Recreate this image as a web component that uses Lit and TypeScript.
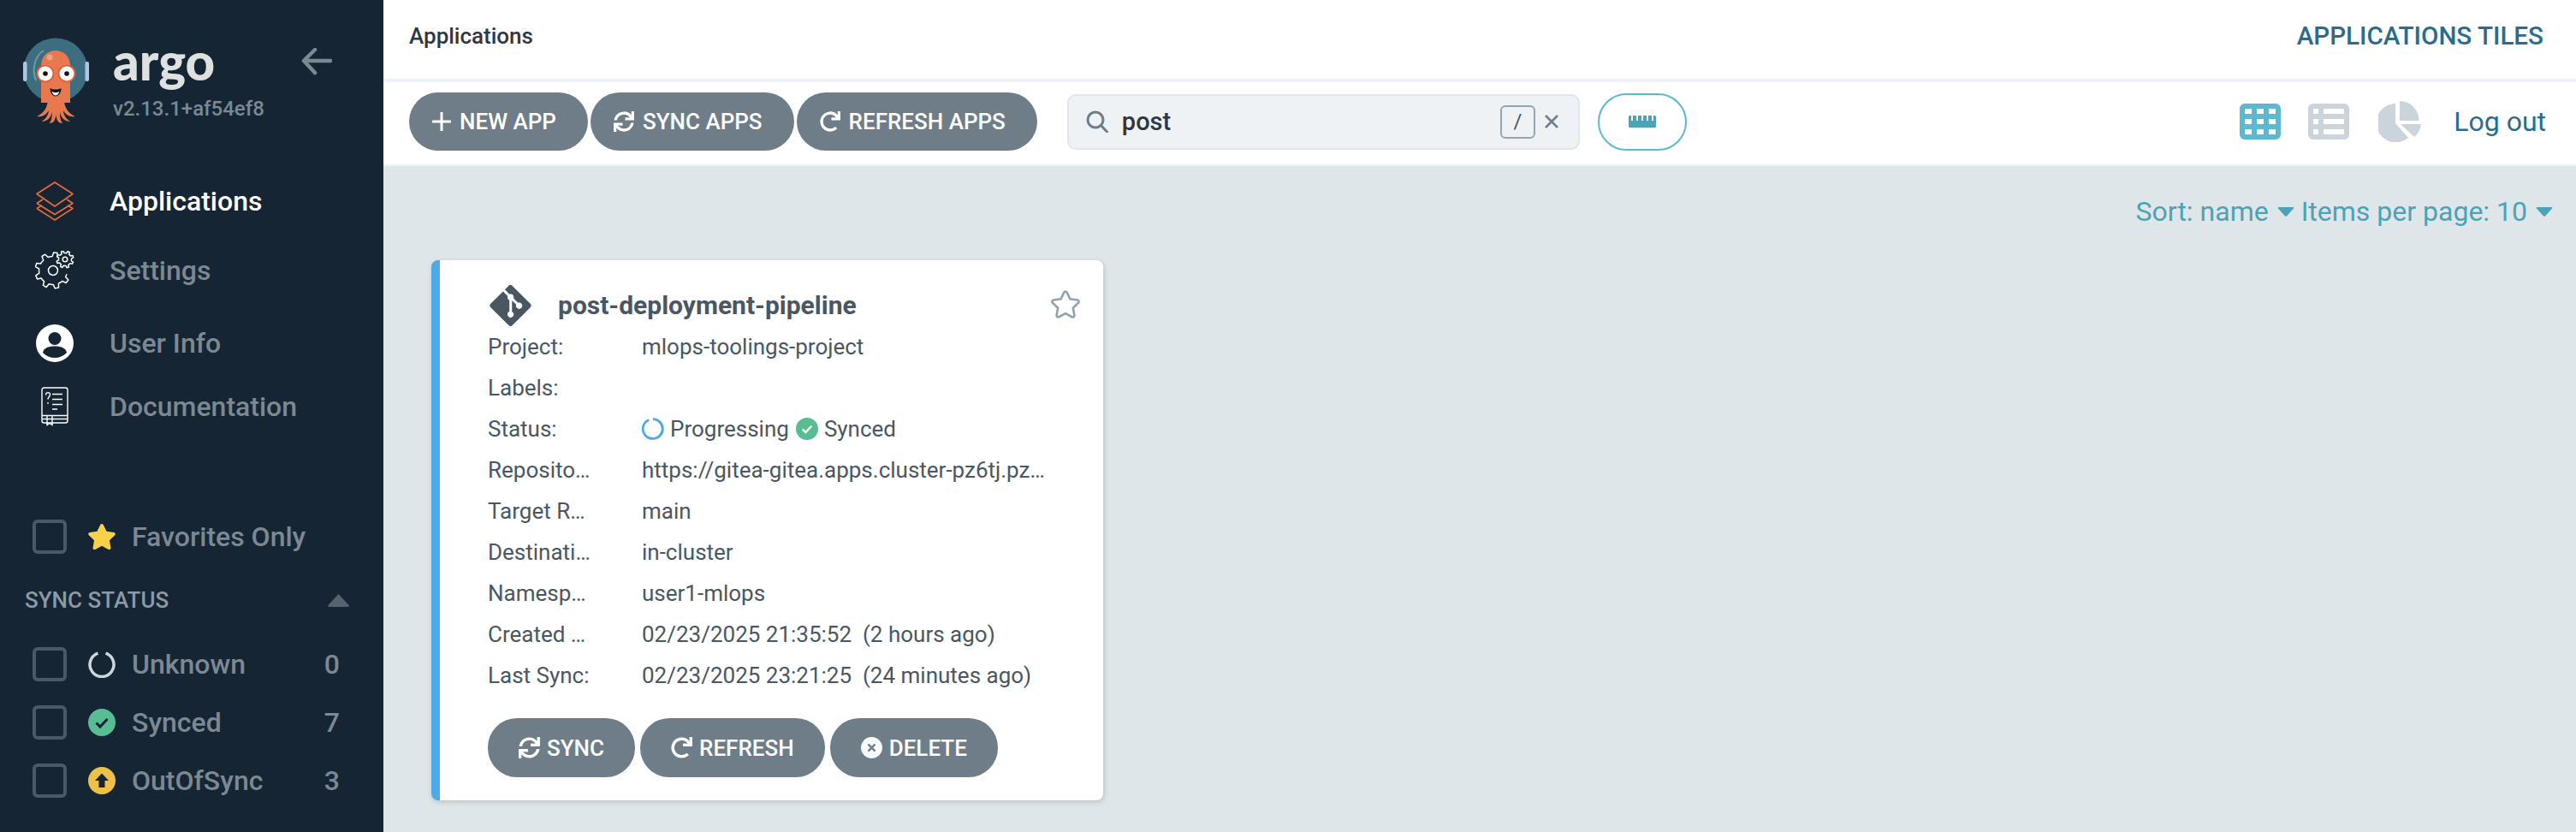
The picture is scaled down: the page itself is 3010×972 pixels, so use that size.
import { LitElement, html, css, svg } from 'lit';
import { customElement, state } from 'lit/decorators.js';

const FA_SYNC = 'M440.65 12.57l4 82.77A247.16 247.16 0 0 0 255.83 8C134.73 8 33.91 94.92 12.29 209.82A12 12 0 0 0 24.09 224h49.05a12 12 0 0 0 11.67-9.26 175.91 175.91 0 0 1 317-56.94l-101.46-4.86a12 12 0 0 0-12.57 12v47.41a12 12 0 0 0 12 12H500a12 12 0 0 0 12-12V12a12 12 0 0 0-12-12h-47.37a12 12 0 0 0-11.98 12.57zM255.83 432a175.61 175.61 0 0 1-146-77.8l101.8 4.87a12 12 0 0 0 12.57-12v-47.4a12 12 0 0 0-12-12H12a12 12 0 0 0-12 12V500a12 12 0 0 0 12 12h47.35a12 12 0 0 0 12-12.6l-4.15-82.57A247.17 247.17 0 0 0 255.83 504c121.11 0 221.93-86.92 243.55-201.82a12 12 0 0 0-11.8-14.18h-49.05a12 12 0 0 0-11.67 9.26A175.86 175.86 0 0 1 255.83 432z';
const FA_REDO = 'M500.33 0h-47.41a12 12 0 0 0-12 12.57l4 82.76A247.42 247.42 0 0 0 256 8C119.34 8 7.9 119.53 8 256.19 8.1 393.07 119.1 504 256 504a247.1 247.1 0 0 0 166.18-63.91 12 12 0 0 0 .48-17.43l-34-34a12 12 0 0 0-16.38-.55A176 176 0 1 1 402.1 157.8l-101.53-4.87a12 12 0 0 0-12.57 12v47.41a12 12 0 0 0 12 12h200.33a12 12 0 0 0 12-12V12a12 12 0 0 0-12-12z';
const FA_GIT = 'M439.55 236.05L244 40.45a28.87 28.87 0 0 0-40.81 0l-40.66 40.63 51.52 51.52c27.06-9.14 52.68 16.77 43.39 43.68l49.66 49.66c34.23-11.8 61.18 31 35.49 56.69-26.49 26.49-70.21-2.87-56-37.34L240.22 199v121.85c25.3 12.54 22.26 41.85 9.08 55a34.34 34.34 0 0 1-48.55 0c-17.57-17.6-11.07-46.91 11.25-56v-123c-20.8-8.51-24.6-30.74-18.64-45L142.57 101 8.45 235.14a28.86 28.86 0 0 0 0 40.81l195.61 195.6a28.86 28.86 0 0 0 40.8 0l194.69-194.69a28.86 28.86 0 0 0 0-40.81z';
const FA_STAR = 'M259.3 17.8L194 150.2 47.9 171.5c-26.2 3.8-36.7 36.1-17.7 54.6l105.7 103-25 145.5c-4.5 26.3 23.2 46 46.4 33.7L288 439.6l130.7 68.7c23.2 12.2 50.9-7.4 46.4-33.7l-25-145.5 105.7-103c19-18.5 8.5-50.8-17.7-54.6L382 150.2 316.7 17.8c-11.7-23.6-45.6-23.9-57.4 0z';

// teeth along an arc, left open when the arc is not a full circle
function gearPath(cx: number, cy: number, rOut: number, rIn: number, teeth: number, from = 0, to = 360) {
  const step = 360 / teeth;
  const pts: string[] = [];
  const at = (r: number, a: number) => {
    const rad = (a * Math.PI) / 180;
    return `${(cx + r * Math.cos(rad)).toFixed(2)} ${(cy + r * Math.sin(rad)).toFixed(2)}`;
  };
  for (let a = from; a < to - 0.01; a += step) {
    pts.push(at(rIn, a), at(rIn, a + step * 0.3), at(rOut, a + step * 0.42), at(rOut, a + step * 0.72), at(rIn, a + step * 0.85));
  }
  pts.push(at(rIn, to));
  return 'M' + pts.join('L') + (to - from >= 360 ? 'Z' : '');
}

const syncIcon = (cls = 'btn-icon') => html`<svg class=${cls} viewBox="0 0 512 512"><path fill="currentColor" d=${FA_SYNC}></path></svg>`;
const redoIcon = (cls = 'btn-icon') => html`<svg class=${cls} viewBox="0 0 512 512"><path fill="currentColor" d=${FA_REDO}></path></svg>`;
const plusIcon = html`<svg class="btn-icon plus" viewBox="0 0 22 22"><path d="M11 1v20M1 11h20" stroke="currentColor" stroke-width="3" stroke-linecap="round"></path></svg>`;
const closeCircle = html`<svg class="btn-icon" viewBox="0 0 26 26"><circle cx="13" cy="13" r="13" fill="#f7f9fa"></circle><path d="M9.500 9.500l7 7M16.500 9.500l-7 7" stroke="#6f7d88" stroke-width="2.400" stroke-linecap="round"></path></svg>`;

const logo = html`<svg class="logo" viewBox="0 0 78 101">
  <circle cx="38" cy="38" r="37.500" fill="#3c6e80"></circle>
  <rect x="0" y="28" width="4.500" height="23" rx="2" fill="#aac9e0"></rect>
  <rect x="72.500" y="28" width="4.500" height="23" rx="2" fill="#aac9e0"></rect>
  <path d="M15 50C10 38 13 22 24 15" fill="none" stroke="#6d9aa8" stroke-width="2"></path>
  <path transform="translate(38 0) scale(.76 1) translate(-38.500 0)" d="M26 76C24 85 17 89 10 92C18 93 24 90 28 85C27 91 23 95 17 98C25 98 31 94 33 87C33 93 32 97 29 100C36 100 38 96 39 90C40 96 42 100 49 100C46 97 45 93 45 87C47 94 53 98 61 98C55 95 51 91 50 85C54 90 60 93 68 92C61 89 54 85 52 76L46 72H32Z" fill="#e8784d"></path>
  <path d="M21 76V33C21 9 55 9 55 33V76Z" fill="#e8784d"></path>
  <circle cx="31" cy="23" r="3.500" fill="#f0a184"></circle>
  <circle cx="26" cy="42" r="9.500" fill="#fff" stroke="#e0623c" stroke-width="2"></circle>
  <circle cx="51" cy="42" r="9.500" fill="#fff" stroke="#e0623c" stroke-width="2"></circle>
  <circle cx="26" cy="42" r="2.800" fill="#111"></circle>
  <circle cx="51" cy="42" r="2.800" fill="#111"></circle>
  <path d="M31.500 59C35.500 61 40.500 61 44.500 59C44.500 65 41 68.500 38 68.500C35 68.500 31.500 65 31.500 59Z" fill="#111"></path>
  <path d="M33.500 63C36.500 64.500 39.500 64.500 42.500 63C41.500 66 39.500 67.500 38 67.500C36.500 67.500 34.500 66 33.500 63Z" fill="#fff"></path>
</svg>`;

const layersIcon = html`<svg class="nav-svg" viewBox="0 0 46 46" fill="none" stroke="#e96d3b" stroke-width="1.600" stroke-linejoin="round">
  <path d="M2 25.500L23 38.500L44 25.500L37 21M9 21L2 25.500"></path>
  <path d="M2 31.500L23 45L44 31.500L38 28M8 28L2 31.500"></path>
  <path d="M23 1L44 14.500L23 29L2 14.500Z"></path>
</svg>`;

const settingsIcon = html`<svg class="nav-svg" viewBox="0 0 46 46" fill="none" stroke="#fff" stroke-width="1.500" stroke-linejoin="round">
  <path d=${gearPath(21, 23, 21, 16.5, 9, 15, 285)}></path>
  <circle cx="21" cy="23" r="5.500"></circle>
  <path d=${gearPath(35, 10, 10, 7.5, 8)}></path>
  <circle cx="35" cy="10" r="2.800"></circle>
</svg>`;

const userIcon = html`<svg class="nav-svg" viewBox="0 0 46 46">
  <circle cx="23" cy="23" r="22" fill="#fff"></circle>
  <circle cx="23" cy="17.500" r="7.500" fill="#152533"></circle>
  <path d="M9 34C10 28 17 26.500 23 26.500C29 26.500 36 28 37 34C33 38 28 40 23 40C18 40 13 38 9 34Z" fill="#152533"></path>
</svg>`;

const docIcon = html`<svg class="nav-svg" viewBox="0 0 46 46" fill="none" stroke="#fff" stroke-width="1.400">
  <rect x="8" y="1" width="30" height="41" rx="2.500"></rect>
  <path d="M8 33.500H38M8 37.500H38M14 34V44.500L17 42.500L20 44.500V34"></path>
  <path d="M20 8.500H32M20 14.500H32M20 20.500H32M20 26H26"></path>
  <path d="M12.500 9.500C12.500 5.500 17.500 6 17.500 9C17.500 11.500 15 11.500 15 14.500M15 18V19.800"></path>
</svg>`;

const starFilled = html`<svg class="status-icon" viewBox="0 0 576 512"><path fill="#f8d148" d=${FA_STAR}></path></svg>`;
const unknownIcon = html`<svg class="status-icon" viewBox="0 0 32 32"><path d="M11.500 3.200A14 14 0 1 0 20.500 3.200" fill="none" stroke="#ced6dd" stroke-width="3.500"></path></svg>`;
const syncedIcon = (cls = 'status-icon') => html`<svg class=${cls} viewBox="0 0 32 32"><circle cx="16" cy="16" r="16" fill="#59bd94"></circle><path d="M9.500 16.500L14 21L22.500 12" fill="none" stroke=${cls === 'status-icon' ? '#152533' : '#fff'} stroke-width="3"></path></svg>`;
const outOfSyncIcon = html`<svg class="status-icon" viewBox="0 0 32 32"><circle cx="16" cy="16" r="16" fill="#efc047"></circle><path d="M16 7.500L24 16H19.500V24H12.500V16H8Z" fill="#152533"></path></svg>`;

const CARD_ROWS = [
  { label: 'Project:', value: 'mlops-toolings-project' },
  { label: 'Labels:', value: '' },
  { label: 'Status:', value: 'status' },
  { label: 'Repository:', value: 'https://gitea-gitea.apps.cluster-pz6tj.pz6tj.sandbox.opentlc.com/user1/mlops' },
  { label: 'Target Revision:', value: 'main' },
  { label: 'Destination:', value: 'in-cluster' },
  { label: 'Namespace:', value: 'user1-mlops' },
  { label: 'Created At:', value: '02/23/2025 21:35:52\u00a0 (2 hours ago)' },
  { label: 'Last Sync:', value: '02/23/2025 23:21:25\u00a0 (24 minutes ago)' },
];

@customElement('app-root')
export class AppRoot extends LitElement {
  @state() search = 'post';

  static styles = css`
    :host { display: block; width: 3010px; height: 972px; overflow: hidden; font-family: Roboto, sans-serif; }
    * { box-sizing: border-box; }
    .page { display: flex; height: 972px; }

    .sidebar { width: 448px; flex-shrink: 0; background: #152533; color: #7c8892; }
    .brand { display: flex; height: 212px; padding: 44px 0 0 27px; }
    .logo { width: 78px; height: 101px; flex-shrink: 0; }
    .brand-text { margin-left: 27px; width: 220px; }
    .wordmark { font-family: Lato, sans-serif; font-weight: 900; font-size: 60px; line-height: 60px; color: #dfe1e0; margin-top: -3px; height: 71px; }
    .version { font-size: 24px; line-height: 30px; font-weight: 500; white-space: nowrap; }
    .collapse { width: 36px; height: 32px; margin-top: 12px; flex-shrink: 0; }

    .nav-item { display: flex; align-items: center; height: 46px; padding-left: 41px; font-size: 32px; font-weight: 500; }
    .nav-item.active { color: #fff; }
    .nav-item:nth-child(2) { margin-top: 35px; }
    .nav-item:nth-child(3) { margin-top: 39px; }
    .nav-item:nth-child(4) { margin-top: 28px; }
    .nav-svg { width: 46px; height: 46px; margin-right: 41px; flex-shrink: 0; }

    .filter { display: flex; align-items: center; height: 40px; padding: 0 51px 0 38px; font-size: 32px; font-weight: 500; }
    .filter.favorites { margin-top: 109px; }
    .filter + .filter { margin-top: 28px; }
    .check { width: 40px; height: 40px; border: 4px solid #4b5966; border-radius: 6px; flex-shrink: 0; margin-right: 25px; }
    .status-icon { width: 32px; height: 32px; flex-shrink: 0; margin-right: 19px; }
    .favorites .status-icon { width: 34px; margin-left: -1px; margin-right: 18px; }
    .count { margin-left: auto; }
    .filter-title { display: flex; align-items: center; justify-content: space-between; height: 40px; margin: 34px 0 35px; padding: 0 40px 0 29px; font-size: 26px; font-weight: 500; color: #8d99a3; }
    .caret-up { width: 25px; height: 15px; }

    .main { flex: 1; min-width: 0; display: flex; flex-direction: column; background: #dee6ea; }
    .topbar { display: flex; align-items: center; justify-content: space-between; height: 96px; padding: 0 38px 8px 30px; background: #fff; border-bottom: 4px solid #eff2f5; }
    .crumb { font-size: 26px; font-weight: 500; color: #2f3644; }
    .page-title { font-size: 29.6px; font-weight: 500; color: #2c6c8a; }

    .toolbar { display: flex; align-items: center; height: 98px; padding: 0 35px 4px 30px; background: #fff; border-bottom: 2px solid #eff2f5; }
    .actions { display: flex; gap: 3px; }
    .btn { display: flex; align-items: center; gap: 10px; height: 68px; padding: 0 37px 0 27px; border: 0; border-radius: 34px; background: #6f7d88; color: #fff; font-family: inherit; font-size: 26px; font-weight: 500; white-space: nowrap; }
    .btn-icon { width: 24px; height: 24px; flex-shrink: 0; }
    .btn-icon.plus { width: 22px; height: 22px; }

    .search { display: flex; align-items: center; width: 599px; height: 65px; margin-left: 35px; padding: 0 23px 0 20px; background: #eff2f5; border: 2px solid #e1e6ea; border-radius: 10px; }
    .search-icon { width: 26px; height: 26px; flex-shrink: 0; }
    .search-text { flex: 1; margin-left: 16px; font-size: 29px; font-weight: 500; color: #2f3644; }
    .kbd { display: flex; align-items: center; justify-content: center; width: 41px; height: 39px; border: 2px solid #95a4b2; border-radius: 6px; font-size: 24px; color: #4b5563; }
    .clear { width: 16px; height: 16px; margin-left: 11px; flex-shrink: 0; }
    .ruler-btn { display: flex; align-items: center; justify-content: center; width: 104px; height: 67px; margin-left: 21px; border: 2px solid #5bb9d0; border-radius: 34px; background: #fff; }
    .ruler { width: 32px; height: 14px; }

    .view-tools { display: flex; align-items: center; margin-left: auto; }
    .view-icon { width: 48px; height: 42px; margin-right: 32px; }
    .pie { width: 50px; height: 48px; margin-right: 38px; margin-left: 2px; }
    .logout { font-size: 32px; color: #2c6c8a; }

    .content { flex: 1; padding: 0 27px 0 56px; }
    .sort-bar { display: flex; justify-content: flex-end; align-items: center; height: 58px; margin-top: 24px; font-size: 32px; color: #4aa3b6; }
    .sort-bar span { white-space: nowrap; }
    .caret-down { width: 20px; height: 11px; margin: 0 8px 0 10px; }
    .caret-down:last-child { margin-right: 0; }

    .card { width: 785px; height: 631px; margin-top: 28px; padding: 28px 26px 0 56px; background: #fff; border-left: 10px solid #4fa9e6; border-radius: 8px; box-shadow: 1px 2px 6px rgba(0, 0, 0, 0.16); }
    .card-title { display: flex; align-items: center; height: 49px; }
    .git { width: 49px; height: 48px; margin-left: 2px; flex-shrink: 0; }
    .app-name { flex: 1; margin-left: 31px; font-size: 30px; font-weight: 700; color: #495763; }
    .fav { width: 36px; height: 33px; margin-top: -2px; }
    .row { display: grid; grid-template-columns: 180px 1fr; align-items: center; height: 48px; padding-right: 40px; font-size: 26px; color: #495763; }
    .row div { white-space: nowrap; overflow: hidden; text-overflow: ellipsis; }
    .row .key { padding-right: 60px; }
    .status { display: flex; align-items: center; }
    .status svg { width: 26px; height: 26px; flex-shrink: 0; margin-right: 7px; }
    .status span { margin-right: 8px; }
    .card-actions { display: flex; gap: 6px; margin-top: 26px; }
    .card-actions .btn { height: 69px; padding: 0 36px; gap: 8px; }
    .card-actions .btn-icon { width: 25px; height: 25px; }
  `;

  private renderFilter(icon: unknown, label: string, count: string) {
    return html`
      <div class="filter">
        <div class="check"></div>
        ${icon}
        <span>${label}</span>
        <span class="count">${count}</span>
      </div>
    `;
  }

  private renderRow(row: { label: string; value: string }) {
    const value = row.value === 'status'
      ? html`<div class="status">
          <svg viewBox="0 0 25 25"><path d="M8 2.300A11 11 0 1 0 12.500 1.500M12.500 1.500A11 11 0 0 1 12.500 23.500" fill="none" stroke="#4fa9e6" stroke-width="2.600"></path></svg>
          <span>Progressing</span>
          ${syncedIcon('synced')}
          <span>Synced</span>
        </div>`
      : html`<div>${row.value}</div>`;
    return html`<div class="row"><div class="key">${row.label}</div>${value}</div>`;
  }

  render() {
    return html`
      <div class="page">
        <aside class="sidebar">
          <div class="brand">
            ${logo}
            <div class="brand-text">
              <div class="wordmark">argo</div>
              <div class="version">v2.13.1+af54ef8</div>
            </div>
            <svg class="collapse" viewBox="0 0 36 32" fill="none" stroke="#7c8892" stroke-width="4.500" stroke-linecap="round" stroke-linejoin="round"><path d="M34 15H3M16 2L3 15L16 29"></path></svg>
          </div>
          <nav>
            <div class="nav-item active">${layersIcon}Applications</div>
            <div class="nav-item">${settingsIcon}Settings</div>
            <div class="nav-item">${userIcon}User Info</div>
            <div class="nav-item">${docIcon}Documentation</div>
          </nav>
          <div class="filter favorites">
            <div class="check"></div>
            ${starFilled}
            <span>Favorites Only</span>
          </div>
          <div class="filter-title">
            <span>SYNC STATUS</span>
            <svg class="caret-up" viewBox="0 0 25 15"><path d="M12.500 0L25 13.500Q25 15 23 15H2Q0 15 0 13.500Z" fill="#56626d"></path></svg>
          </div>
          ${this.renderFilter(unknownIcon, 'Unknown', '0')}
          ${this.renderFilter(syncedIcon(), 'Synced', '7')}
          ${this.renderFilter(outOfSyncIcon, 'OutOfSync', '3')}
        </aside>
        <main class="main">
          <div class="topbar">
            <span class="crumb">Applications</span>
            <span class="page-title">APPLICATIONS TILES</span>
          </div>
          <div class="toolbar">
            <div class="actions">
              <button class="btn">${plusIcon}NEW APP</button>
              <button class="btn">${syncIcon()}SYNC APPS</button>
              <button class="btn">${redoIcon()}REFRESH APPS</button>
            </div>
            <div class="search">
              <svg class="search-icon" viewBox="0 0 26 26" fill="none" stroke="#6f7d88" stroke-width="3"><circle cx="11" cy="11" r="9"></circle><path d="M17.500 17.500L24.500 25" stroke-linecap="round"></path></svg>
              <span class="search-text">${this.search}</span>
              <span class="kbd">/</span>
              <svg class="clear" viewBox="0 0 16 16" stroke="#6f7d88" stroke-width="2.600"><path d="M1 1L15 15M15 1L1 15"></path></svg>
            </div>
            <button class="ruler-btn">
              <svg class="ruler" viewBox="0 0 32 14"><path fill="#4aa3b6" d="M0 1.500Q0 0 1.500 0H3V6H5V0H9V6H11V0H15V6H17V0H21V6H23V0H27V6H29V0H30.500Q32 0 32 1.500V12.500Q32 14 30.500 14H1.500Q0 14 0 12.500Z"></path></svg>
            </button>
            <div class="view-tools">
              <svg class="view-icon" viewBox="0 0 48 42">
                <rect width="48" height="42" rx="6" fill="#5bb9d0"></rect>
                <path fill="#fff" d="M6 6h8v6H6zM20 6h8v6h-8zM34 6h8v6h-8zM6 18h8v6H6zM20 18h8v6h-8zM34 18h8v6h-8zM6 30h8v6H6zM20 30h8v6h-8zM34 30h8v6h-8z"></path>
              </svg>
              <svg class="view-icon" viewBox="0 0 48 42">
                <rect width="48" height="42" rx="6" fill="#ccd4db"></rect>
                <path fill="#fff" d="M6 6h6v6H6zM18 6h24v6H18zM6 18h6v6H6zM18 18h24v6H18zM6 30h6v6H6zM18 30h24v6H18z"></path>
              </svg>
              <svg class="pie" viewBox="0 0 50 48" fill="#ccd4db">
                <path d="M20 3V26L35 43A22.700 22.700 0 1 1 20 3Z"></path>
                <path d="M25 0A22.500 22.500 0 0 1 47.500 23H25Z"></path>
                <path d="M26 27H50A24 24 0 0 1 42 42Z"></path>
              </svg>
              <span class="logout">Log out</span>
            </div>
          </div>
          <div class="content">
            <div class="sort-bar">
              <span>Sort: name</span>
              ${this.caret()}
              <span>Items per page: 10</span>
              ${this.caret()}
            </div>
            <div class="card">
              <div class="card-title">
                <svg class="git" viewBox="0 32 448 448"><path fill="#495763" d=${FA_GIT}></path></svg>
                <span class="app-name">post-deployment-pipeline</span>
                <svg class="fav" viewBox="-20 -20 616 552"><path fill="none" stroke="#8fa4b1" stroke-width="44" d=${FA_STAR}></path></svg>
              </div>
              ${CARD_ROWS.map(row => this.renderRow(row))}
              <div class="card-actions">
                <button class="btn">${syncIcon()}SYNC</button>
                <button class="btn">${redoIcon()}REFRESH</button>
                <button class="btn">${closeCircle}DELETE</button>
              </div>
            </div>
          </div>
        </main>
      </div>
    `;
  }

  private caret() {
    return svg`<svg class="caret-down" viewBox="0 0 20 11"><path d="M1.500 0H18.500Q20 0 19 1.500L11 10.500Q10 11 9 10.500L1 1.500Q0 0 1.500 0Z" fill="#4aa3b6"></path></svg>`;
  }
}
